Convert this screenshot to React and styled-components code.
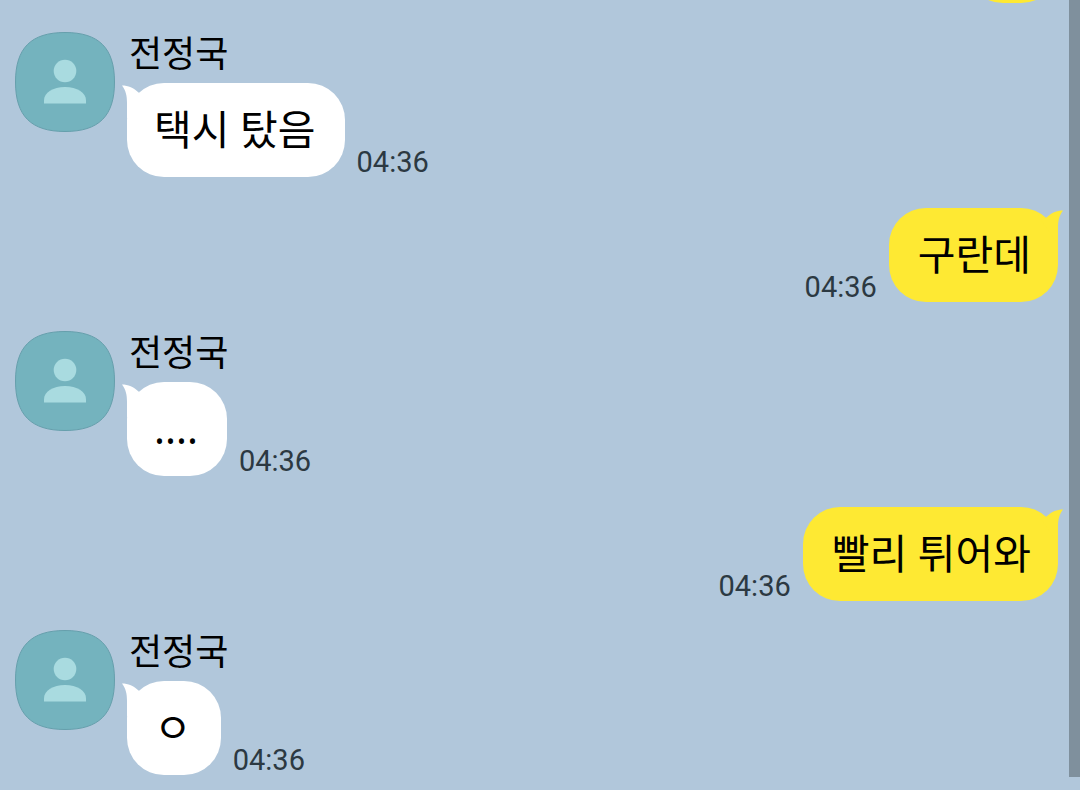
import styled, { createGlobalStyle } from "styled-components";

const GlobalStyle = createGlobalStyle`
  * {
    box-sizing: border-box;
  }
  body {
    margin: 0;
    background-color: #fff;
    font-family: "Noto Sans CJK KR", "Noto Sans", sans-serif;
    color: #000;
  }
`;

const Screen = styled.div`
  display: flex;
  flex-direction: column;
  height: 100vh;
`;

const ChatLog = styled.main`
  position: relative;
  display: flex;
  flex: 1;
  flex-direction: column;
  justify-content: flex-end;
  min-height: 0;
  overflow: hidden;
  padding: 0 22px 15px 15px;
  background-color: #b1c7db;
`;

const Composer = styled.footer`
  flex: none;
  height: 20px;
  background-color: #fff;
`;

const ScrollThumb = styled.div`
  position: absolute;
  top: 0;
  right: 0;
  bottom: 13px;
  width: 11px;
  background-color: #7f909d;
`;

const MessageList = styled.ol`
  display: flex;
  flex-direction: column;
  list-style: none;
  margin: 0;
  padding: 0;
`;

const MessageRow = styled.li`
  display: flex;
  align-items: flex-start;
  justify-content: ${({ $mine }) => ($mine ? "flex-end" : "flex-start")};
  gap: 12px;
  margin-top: ${({ $mine }) => ($mine ? "31px" : "29px")};
`;

const AvatarIcon = styled.svg`
  flex: none;
  width: 100px;
  height: 100px;
`;

const Sender = styled.div`
  margin-bottom: 13px;
  padding-left: 2px;
  font-size: 36px;
  line-height: 38px;
`;

const BubbleLine = styled.div`
  display: flex;
  flex-direction: ${({ $mine }) => ($mine ? "row-reverse" : "row")};
  align-items: flex-end;
  gap: 12px;
`;

const Bubble = styled.div`
  position: relative;
  min-width: 92px;
  min-height: 94px;
  padding: ${({ $mine }) => ($mine ? "21px 27px 23px 29px" : "21px 29px 23px 27px")};
  border-radius: 37px;
  font-family: "Noto Sans", "Noto Sans CJK KR", sans-serif;
  font-size: 41px;
  line-height: 50px;
  color: #000;
  background-color: ${({ $mine }) => ($mine ? "#fee933" : "#fff")};
`;

const Tail = styled.svg`
  position: absolute;
  top: 0;
  ${({ $mine }) => ($mine ? "right: -5px;" : "left: -5px;")}
  width: 22px;
  height: 36px;
  fill: ${({ $mine }) => ($mine ? "#fee933" : "#fff")};
`;

const Time = styled.time`
  font-family: Roboto, sans-serif;
  font-size: 29px;
  line-height: 30px;
  color: #2c3942;
`;

const messages = [
  { id: 1, mine: true, text: "" },
  { id: 2, sender: "전정국", text: "택시 탔음", time: "04:36" },
  { id: 3, mine: true, text: "구란데", time: "04:36" },
  { id: 4, sender: "전정국", text: "....", time: "04:36" },
  { id: 5, mine: true, text: "빨리 튀어와", time: "04:36" },
  { id: 6, sender: "전정국", text: "ㅇ", time: "04:36" },
];

function Avatar() {
  return (
    <AvatarIcon viewBox="0 0 100 100" aria-hidden="true">
      <path
        d="M50 .5C84 .5 99.500 16 99.500 50S84 99.500 50 99.500.5 84 .5 50 16 .5 50 .5Z"
        fill="#74b3be"
        stroke="#669fac"
      />
      <circle cx="50" cy="39" r="11.300" fill="#a9dbe0" />
      <path d="M29 71.500v-3C29 60.500 38 55 50 55s21 5.500 21 13.500v3Z" fill="#a9dbe0" />
    </AvatarIcon>
  );
}

function BubbleTail({ mine }) {
  return (
    <Tail $mine={mine} viewBox="0 0 22 36" aria-hidden="true">
      <path
        d={
          mine
            ? "M22 2.500C18 8 17 13 17 20V36L0 12L5.500 9.500C10 5 16 2.500 22 2.500Z"
            : "M0 2.500C4 8 5 13 5 20V36L22 12L16.500 9.500C12 5 6 2.500 0 2.500Z"
        }
      />
    </Tail>
  );
}

function Message({ mine, sender, text, time }) {
  return (
    <MessageRow $mine={mine}>
      {!mine && <Avatar />}
      <div>
        {sender && <Sender>{sender}</Sender>}
        <BubbleLine $mine={mine}>
          <Bubble $mine={mine}>
            <BubbleTail mine={mine} />
            {text}
          </Bubble>
          {time && <Time>{time}</Time>}
        </BubbleLine>
      </div>
    </MessageRow>
  );
}

export default function App() {
  return (
    <>
      <GlobalStyle />
      <Screen lang="ko">
        <ChatLog>
          <MessageList>
            {messages.map((message) => (
              <Message key={message.id} {...message} />
            ))}
          </MessageList>
          <ScrollThumb />
        </ChatLog>
        <Composer />
      </Screen>
    </>
  );
}
